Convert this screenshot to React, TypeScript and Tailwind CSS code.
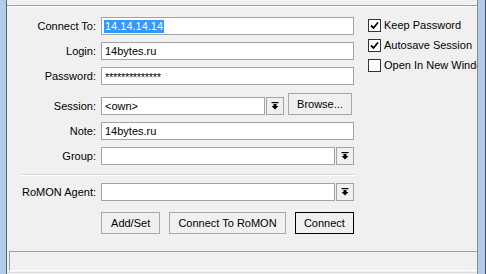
import React from 'react';

function DropIcon() {
  return (
    <svg width="8" height="8" viewBox="0 0 8 8" className="block">
      <rect x="0.5" y="0" width="7" height="1.2" fill="#000" />
      <rect x="2.5" y="2" width="3" height="2" fill="#000" />
      <polygon points="0.5,4 7.5,4 4,7.5" fill="#000" />
    </svg>
  );
}

function DropButton() {
  return (
    <div className="ml-[1px] flex h-[18px] w-[18px] items-center justify-center border border-[#a3a3a3] bg-[#f0f0f0]">
      <DropIcon />
    </div>
  );
}

function Label({ text }: { text: string }) {
  return <div className="w-[89px] shrink-0 pr-0 text-right leading-none">{text}</div>;
}

function Input({ w, children }: { w: number; children?: React.ReactNode }) {
  return (
    <div
      className="flex h-[18px] items-center overflow-hidden border border-[#a3a3a3] bg-white pl-[2px] leading-none"
      style={{ width: w }}
    >
      {children}
    </div>
  );
}

function Check({ checked, label }: { checked: boolean; label: string }) {
  return (
    <div className="flex h-[13px] items-center whitespace-nowrap">
      <div className="flex h-[13px] w-[13px] shrink-0 items-center justify-center border border-[#333] bg-white">
        {checked && (
          <svg width="9" height="9" viewBox="0 0 9 9">
            <path d="M1 4.5 L3.5 7 L8 1.5" stroke="#000" strokeWidth="1.8" fill="none" />
          </svg>
        )}
      </div>
      <span className="ml-[3px] leading-none">{label}</span>
    </div>
  );
}

function Btn({ w, children, def }: { w: number; children: React.ReactNode; def?: boolean }) {
  return (
    <div
      className={
        'flex h-[22px] items-center justify-center bg-[#f0f0f0] leading-none ' +
        (def ? 'border border-black' : 'border border-[#a8a8a8]')
      }
      style={{ width: w }}
    >
      {children}
    </div>
  );
}

export default function App() {
  return (
    <div className="flex h-[274px] w-[486px] overflow-hidden bg-[#f0f0f0] font-['Liberation_Sans',Arial,sans-serif] text-[11px] text-black">
      <div className="w-[7px] shrink-0 border-r border-[#5b6470] bg-[#b2cdeb]" />
      <div className="flex w-[470px] shrink-0 flex-col overflow-hidden">
        <div className="h-[5px]" />
        <div className="h-[2px] border-t border-[#a0a0a0] bg-white" />
        <div className="flex pt-[10px]">
          <div className="flex w-[347px] shrink-0 flex-col">
            <div className="flex h-[18px] items-center gap-[5px]">
              <Label text="Connect To:" />
              <Input w={253}>
                <span className="bg-[#3399ff] px-[1px] py-[1px] text-white">14.14.14.14</span>
              </Input>
            </div>
            <div className="mt-[7px] flex h-[18px] items-center gap-[5px]">
              <Label text="Login:" />
              <Input w={253}>
                <span className="pl-[1px]">14bytes.ru</span>
              </Input>
            </div>
            <div className="mt-[7px] flex h-[18px] items-center gap-[5px]">
              <Label text="Password:" />
              <Input w={253}>
                <span className="pl-[1px] pt-[3px] tracking-[-0.3px]">**************</span>
              </Input>
            </div>
            <div className="mt-[8px] flex h-[22px] items-end">
              <div className="flex h-[18px] items-center gap-[5px]">
                <Label text="Session:" />
                <Input w={164}>
                  <span className="pl-[1px]">&lt;own&gt;</span>
                </Input>
              </div>
              <DropButton />
              <div className="ml-[4px] self-stretch">
                <Btn w={64}>Browse...</Btn>
              </div>
            </div>
            <div className="mt-[7px] flex h-[18px] items-center gap-[5px]">
              <Label text="Note:" />
              <Input w={253}>
                <span className="pl-[1px]">14bytes.ru</span>
              </Input>
            </div>
            <div className="mt-[7px] flex h-[18px] items-center">
              <div className="flex items-center gap-[5px]">
                <Label text="Group:" />
                <Input w={234} />
              </div>
              <DropButton />
            </div>
            <div className="ml-[15px] mt-[9px] h-[2px] w-[332px] border-t border-[#d5d5d5] bg-white" />
            <div className="mt-[7px] flex h-[18px] items-center">
              <div className="flex items-center gap-[5px]">
                <Label text="RoMON Agent:" />
                <Input w={234} />
              </div>
              <DropButton />
            </div>
            <div className="ml-[94px] mt-[11px] flex gap-[9px]">
              <Btn w={60}>Add/Set</Btn>
              <Btn w={118}>Connect To RoMON</Btn>
              <Btn w={60} def>
                Connect
              </Btn>
            </div>
          </div>
          <div className="ml-[14px] flex flex-col gap-[7px] pt-[2px]">
            <Check checked label="Keep Password" />
            <Check checked label="Autosave Session" />
            <Check checked={false} label="Open In New Window" />
          </div>
        </div>
        <div className="ml-[2px] mt-[17px] h-[20px] border-l border-t border-b border-[#a0a0a0] border-b-white" />
        <div className="h-[1px]" />
        <div className="h-[1px] bg-[#dcdcdc]" />
      </div>
      <div className="w-[9px] shrink-0 border-l border-r border-l-[#8a8a8a] border-r-[#4a4f55] bg-[#b2cdeb]" />
    </div>
  );
}
